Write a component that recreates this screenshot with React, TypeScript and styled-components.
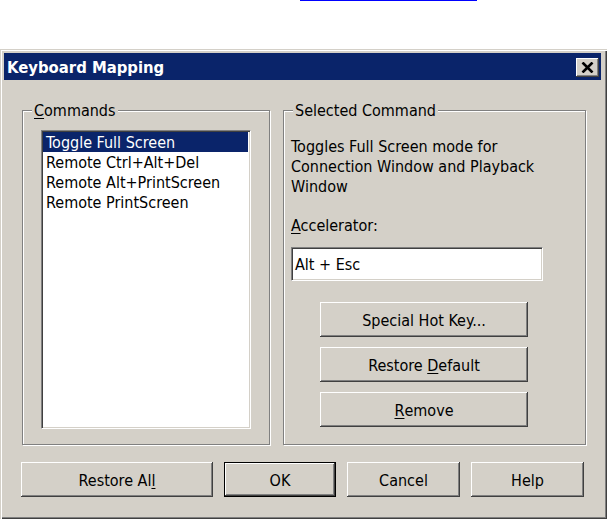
import React from 'react';
import styled, { createGlobalStyle, css } from 'styled-components';

const GlobalStyle = createGlobalStyle`
  html, body {
    margin: 0;
    padding: 0;
    background: #ffffff;
  }
  body {
    font-family: "DejaVu Sans Condensed", "DejaVu Sans", sans-serif;
    font-size: 16px;
    color: #000000;
  }
`;

const face = '#d4d0c8';

const Page = styled.div`
  width: 607px;
  height: 519px;
  overflow: hidden;
`;

const LinkRule = styled.div`
  margin-left: 300px;
  width: 177px;
  height: 1px;
  background: #0000ff;
`;

const Window = styled.div`
  box-sizing: border-box;
  margin-top: 48px;
  width: 607px;
  height: 470px;
  padding: 4px 6px 4px 4px;
  background: ${face};
  box-shadow: inset 1px 1px 0 ${face}, inset 2px 2px 0 #ffffff,
    inset -1px -1px 0 #404040, inset -2px -2px 0 #808080;
  display: flex;
  flex-direction: column;
`;

const TitleBar = styled.div`
  height: 27px;
  background: #0a246a;
  display: flex;
  align-items: center;
  justify-content: space-between;
  padding: 0 2px 0 3px;
`;

const Title = styled.span`
  color: #ffffff;
  font-weight: bold;
  font-size: 16.5px;
  padding-top: 1px;
`;

const bevel = css`
  background: ${face};
  box-shadow: inset -1px -1px 0 #404040, inset 1px 1px 0 #ffffff,
    inset -2px -2px 0 #808080, inset 2px 2px 0 ${face};
`;

const CloseButton = styled.div`
  ${bevel};
  width: 23px;
  height: 19px;
  margin-top: 2px;
  display: flex;
  align-items: center;
  justify-content: center;
`;

const Content = styled.div`
  padding: 30px 0 0 18px;
  display: flex;
  flex-direction: column;
`;

const Groups = styled.div`
  display: flex;
  gap: 13px;
  height: 335px;
`;

const Group = styled.div<{ $width: number }>`
  box-sizing: border-box;
  width: ${(p) => p.$width}px;
  border: 1px solid #808080;
  box-shadow: inset 1px 1px 0 #ffffff, 1px 1px 0 #ffffff;
  display: flex;
  flex-direction: column;
`;

const Legend = styled.div`
  width: fit-content;
  height: 18px;
  line-height: 20px;
  margin: -10px 0 -8px 9px;
  padding: 0 2px;
  background: ${face};
  white-space: nowrap;
`;

const ListBox = styled.div`
  box-sizing: border-box;
  margin: 19px 0 0 18px;
  width: 210px;
  height: 299px;
  background: #ffffff;
  border: 1px solid;
  border-color: #808080 #ffffff #ffffff #808080;
  box-shadow: inset 1px 1px 0 #404040, inset -1px -1px 0 ${face};
  padding: 1px 2px 0 1px;
`;

const ListItem = styled.div<{ $selected?: boolean }>`
  height: 20px;
  line-height: 22px;
  padding-left: 3px;
  white-space: nowrap;
  ${(p) =>
    p.$selected &&
    css`
      background: #0a246a;
      color: #ffffff;
    `}
`;

const Description = styled.div`
  margin: 26px 0 0 7px;
  line-height: 20px;
  width: 285px;
`;

const FieldLabel = styled.div`
  margin: 19px 0 0 7px;
  line-height: 20px;
`;

const EditBox = styled.div`
  box-sizing: border-box;
  margin: 11px 0 0 7px;
  width: 252px;
  height: 34px;
  background: #ffffff;
  border: 1px solid;
  border-color: #808080 #ffffff #ffffff #808080;
  box-shadow: inset 1px 1px 0 #404040, inset -1px -1px 0 ${face};
  padding: 1px 0 0 3px;
  display: flex;
  align-items: center;
`;

const ButtonStack = styled.div`
  margin: 21px 0 0 36px;
  display: flex;
  flex-direction: column;
  gap: 10px;
`;

const Button = styled.div<{ $width: number; $default?: boolean }>`
  ${bevel};
  box-sizing: border-box;
  width: ${(p) => p.$width}px;
  height: 35px;
  padding-top: 1px;
  display: flex;
  align-items: center;
  justify-content: center;
  white-space: nowrap;
  ${(p) =>
    p.$default &&
    css`
      border: 1px solid #000000;
    `}
`;

const Footer = styled.div`
  margin: 17px 0 0 -1px;
  display: flex;
  gap: 11px;
`;

const Key = styled.span`
  text-decoration: underline;
  text-underline-offset: 2px;
`;

const commands = [
  'Toggle Full Screen',
  'Remote Ctrl+Alt+Del',
  'Remote Alt+PrintScreen',
  'Remote PrintScreen',
];

export default function App() {
  return (
    <Page>
      <GlobalStyle />
      <LinkRule />
      <Window>
        <TitleBar>
          <Title>Keyboard Mapping</Title>
          <CloseButton>
            <svg width="13" height="11" viewBox="0 0 13 11">
              <path d="M1.5 0.5 L11.5 10.5 M11.5 0.5 L1.5 10.5" stroke="#000" strokeWidth="2.6" />
            </svg>
          </CloseButton>
        </TitleBar>
        <Content>
          <Groups>
            <Group $width={248}>
              <Legend>
                <Key>C</Key>ommands
              </Legend>
              <ListBox>
                {commands.map((c, i) => (
                  <ListItem key={c} $selected={i === 0}>
                    {c}
                  </ListItem>
                ))}
              </ListBox>
            </Group>
            <Group $width={303}>
              <Legend>Selected Command</Legend>
              <Description>
                Toggles Full Screen mode for Connection Window and Playback Window
              </Description>
              <FieldLabel>
                <Key>A</Key>ccelerator:
              </FieldLabel>
              <EditBox>Alt + Esc</EditBox>
              <ButtonStack>
                <Button $width={208}>Special Hot Key...</Button>
                <Button $width={208}>
                  Restore&nbsp;<Key>D</Key>efault
                </Button>
                <Button $width={208}>
                  <Key>R</Key>emove
                </Button>
              </ButtonStack>
            </Group>
          </Groups>
          <Footer>
            <Button $width={192}>
              Restore Al<Key>l</Key>
            </Button>
            <Button $width={112} $default>
              OK
            </Button>
            <Button $width={113}>Cancel</Button>
            <Button $width={113}>Help</Button>
          </Footer>
        </Content>
      </Window>
    </Page>
  );
}
